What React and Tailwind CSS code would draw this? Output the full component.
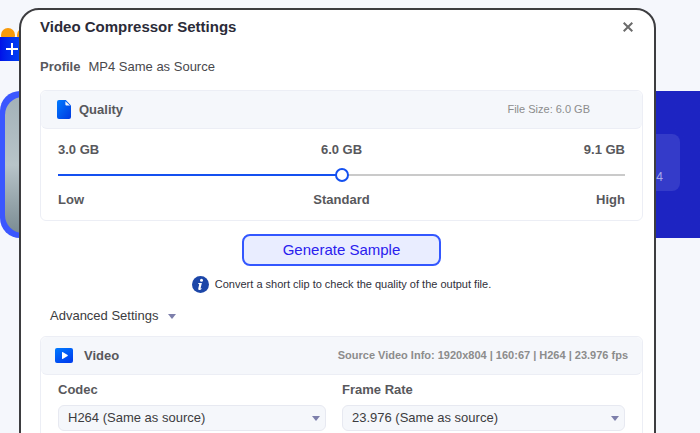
import React, { useState } from 'react';

const codecs = ['H264 (Same as source)', 'H265', 'MPEG4'];
const frameRates = ['23.976 (Same as source)', '24', '25', '30'];

const Caret = () => (
  <svg viewBox="0 0 8 5" className="h-[5px] w-2 fill-[#7d7fab]" aria-hidden="true">
    <path d="M0 0h8L4 5z" />
  </svg>
);

const FileIcon = () => (
  <svg viewBox="0 0 14 19" className="h-[19px] w-[14px]" aria-hidden="true">
    <defs>
      <linearGradient id="file-fill" x1="0" y1="0" x2="1" y2="1">
        <stop offset="0" stopColor="#007bff" />
        <stop offset="1" stopColor="#0038e0" />
      </linearGradient>
    </defs>
    <path d="M2 0h6.8L14 5.4V17a2 2 0 0 1-2 2H2a2 2 0 0 1-2-2V2a2 2 0 0 1 2-2z" fill="url(#file-fill)" />
    <path d="M8.4 1.2v3.4a1 1 0 0 0 1 1H13z" fill="#f5f7fb" />
  </svg>
);

const VideoIcon = () => (
  <svg viewBox="0 0 18 15" className="h-[15px] w-[18px]" aria-hidden="true">
    <defs>
      <linearGradient id="video-fill" x1="0" y1="0" x2="0.6" y2="1">
        <stop offset="0" stopColor="#007bff" />
        <stop offset="1" stopColor="#0040ee" />
      </linearGradient>
    </defs>
    <rect width="18" height="15" rx="2" fill="url(#video-fill)" />
    <path d="M7 4.4v6.2a.4.4 0 0 0 .6.3l5-3a.5.5 0 0 0 0-.8l-5-3a.4.4 0 0 0-.6.3z" fill="#fff" />
  </svg>
);

const InfoIcon = () => (
  <svg viewBox="0 0 17 17" className="h-[17px] w-[17px]" aria-hidden="true">
    <circle cx="8.5" cy="8.5" r="8.5" fill="#1c46a8" />
    <circle cx="9.5" cy="4.3" r="1.5" fill="#fff" />
    <path d="M6.3 7h3.6L8.6 12.2q-.1.7.9.1l.3.5q-1.4 1.4-2.7 1.2-1.3-.3-.8-1.8l.9-3.8q.1-.7-1.1-.7z" fill="#fff" />
  </svg>
);

const SelectField = ({ id, label, options }) => {
  const [value, setValue] = useState(options[0]);

  return (
    <div className="flex flex-col gap-1.5">
      <label htmlFor={id} className="text-[13px] leading-[18px] font-bold text-[#58585c]">{label}</label>
      <div className="relative">
        <select
          id={id}
          value={value}
          onChange={(e) => setValue(e.target.value)}
          className="block h-[26px] w-full appearance-none rounded-md border border-[#e7e9f1] bg-[#f5f7fb] pr-7 pl-[9px] text-[13px] text-[#3c3c40]"
        >
          {options.map(option => (
            <option key={option}>{option}</option>
          ))}
        </select>
        <span className="pointer-events-none absolute inset-y-0 right-1.5 flex items-center">
          <Caret />
        </span>
      </div>
    </div>
  );
};

const QualitySlider = () => {
  const [level, setLevel] = useState(50);

  return (
    <div className="px-[17px] pt-3 pb-[11px] text-[13px] leading-[18px] font-bold text-[#58585c]">
      <div className="grid grid-cols-3">
        <span>3.0 GB</span>
        <span className="text-center">6.0 GB</span>
        <span className="text-right">9.1 GB</span>
      </div>
      <input
        type="range"
        aria-label="Quality"
        min="0"
        max="100"
        value={level}
        onChange={(e) => setLevel(Number(e.target.value))}
        style={{ backgroundImage: `linear-gradient(to right, #1450f0 ${level}%, #cacaca ${level}%)` }}
        className="my-[15px] block h-0.5 w-full appearance-none [&::-webkit-slider-thumb]:h-[14px] [&::-webkit-slider-thumb]:w-[14px] [&::-webkit-slider-thumb]:appearance-none [&::-webkit-slider-thumb]:rounded-full [&::-webkit-slider-thumb]:border-2 [&::-webkit-slider-thumb]:border-[#1450f0] [&::-webkit-slider-thumb]:bg-white"
      />
      <div className="grid grid-cols-3">
        <span>Low</span>
        <span className="text-center">Standard</span>
        <span className="text-right">High</span>
      </div>
    </div>
  );
};

// The converter window that the dialog opens over
const Backdrop = () => (
  <div className="flex flex-col pt-7">
    <div className="flex h-[9px] gap-0.5 overflow-hidden pl-px">
      <span className="h-[14px] w-[14px] rounded-full bg-[#f79a0b]"></span>
      <span className="h-[14px] w-[14px] rounded-full bg-[#f79a0b]"></span>
    </div>
    <div className="flex h-6 w-10 items-center bg-linear-to-r from-[#0010e8] to-[#0a5cff] pl-1.5 text-white">
      <svg viewBox="0 0 12 12" className="h-3 w-3" stroke="currentColor" strokeWidth="2" aria-hidden="true">
        <path d="M6 0v12M0 6h12" />
      </svg>
    </div>
    <div className="mt-[30px] flex h-[147px] items-center justify-between rounded-l-[20px] bg-linear-to-r from-[#3b57ff] from-10% to-[#1d24c2] to-60% pr-5 pl-[5px]">
      <div className="h-[136px] w-56 rounded-[18px] bg-linear-to-b from-[#a3b1b8] via-[#b8c4c9] to-[#7b8c93]"></div>
      <div className="mb-1 flex h-[57px] w-40 items-end justify-end rounded-lg bg-[#343bc9] pr-[17px] pb-1.5 text-xs text-[#a9acea]">MP4</div>
    </div>
  </div>
);

const App = () => {
  const [showAdvanced, setShowAdvanced] = useState(true);

  return (
    <div className="relative h-screen overflow-hidden bg-[#f5f7fc] font-['Liberation_Sans',Arial,sans-serif]">
      <Backdrop />

      <div
        role="dialog"
        aria-labelledby="dialog-title"
        className="absolute top-2 right-11 -bottom-10 left-[19px] overflow-hidden rounded-[20px] border-2 border-[#3d3d40] bg-white pr-[11px] pl-[19px]"
      >
        <div className="flex items-center justify-between pt-2 pr-2.5">
          <h1 id="dialog-title" className="text-[15px] leading-[18px] font-bold text-[#2b2b38]">Video Compressor Settings</h1>
          <button type="button" aria-label="Close" className="text-[#6b6b6b]">
            <svg viewBox="0 0 10 10" className="h-2.5 w-2.5" stroke="currentColor" strokeWidth="2" aria-hidden="true">
              <path d="M.7.7l8.6 8.6M9.3.7L.7 9.3" />
            </svg>
          </button>
        </div>

        <p className="mt-[22px] flex gap-2 text-[13px] leading-[18px] text-[#48484c]">
          <strong className="text-[#58585c]">Profile</strong>
          <span>MP4 Same as Source</span>
        </p>

        <section className="mt-[14px] rounded-md border border-[#eceef5]">
          <div className="flex h-[38px] items-center justify-between rounded-md border-b border-[#eceef5] bg-[#f5f7fb] pr-[52px] pl-4">
            <h2 className="flex items-center gap-2 text-[13px] font-bold text-[#58585c]">
              <FileIcon />
              Quality
            </h2>
            <span className="text-[11px] text-[#8c8c8c]">File Size: 6.0 GB</span>
          </div>
          <QualitySlider />
        </section>

        <div className="mt-[13px] flex flex-col items-center gap-[9px]">
          <button type="button" className="h-8 w-[199px] rounded-lg border-2 border-[#3357ff] bg-[#e9edff] text-[15px] text-[#2a20ee]">
            Generate Sample
          </button>
          <p className="flex items-center gap-1.5 text-[11px] leading-[18px] text-[#2f2f3a]">
            <InfoIcon />
            Convert a short clip to check the quality of the output file.
          </p>
        </div>

        <button
          type="button"
          aria-expanded={showAdvanced}
          onClick={() => setShowAdvanced(!showAdvanced)}
          className="mt-[14px] ml-2.5 flex items-center gap-2.5 text-[13px] leading-[18px] text-[#3c3c40]"
        >
          Advanced Settings
          <Caret />
        </button>

        {showAdvanced && (
          <section className="mt-[11px] rounded-md border border-[#eceef5]">
            <div className="flex h-[38px] items-center justify-between rounded-md border-b border-[#eceef5] bg-[#f5f7fb] px-[14px]">
              <h2 className="flex items-center gap-[11px] text-[13px] font-bold text-[#58585c]">
                <VideoIcon />
                Video
              </h2>
              <span className="text-[11px] font-bold text-[#8c8c8c]">Source Video Info: 1920x804 | 160:67 | H264 | 23.976 fps</span>
            </div>
            <div className="grid grid-cols-[268fr_283fr] gap-4 px-[17px] pt-1.5 pb-4">
              <SelectField id="codec" label="Codec" options={codecs} />
              <SelectField id="frame-rate" label="Frame Rate" options={frameRates} />
            </div>
          </section>
        )}
      </div>
    </div>
  );
};

export default App;
